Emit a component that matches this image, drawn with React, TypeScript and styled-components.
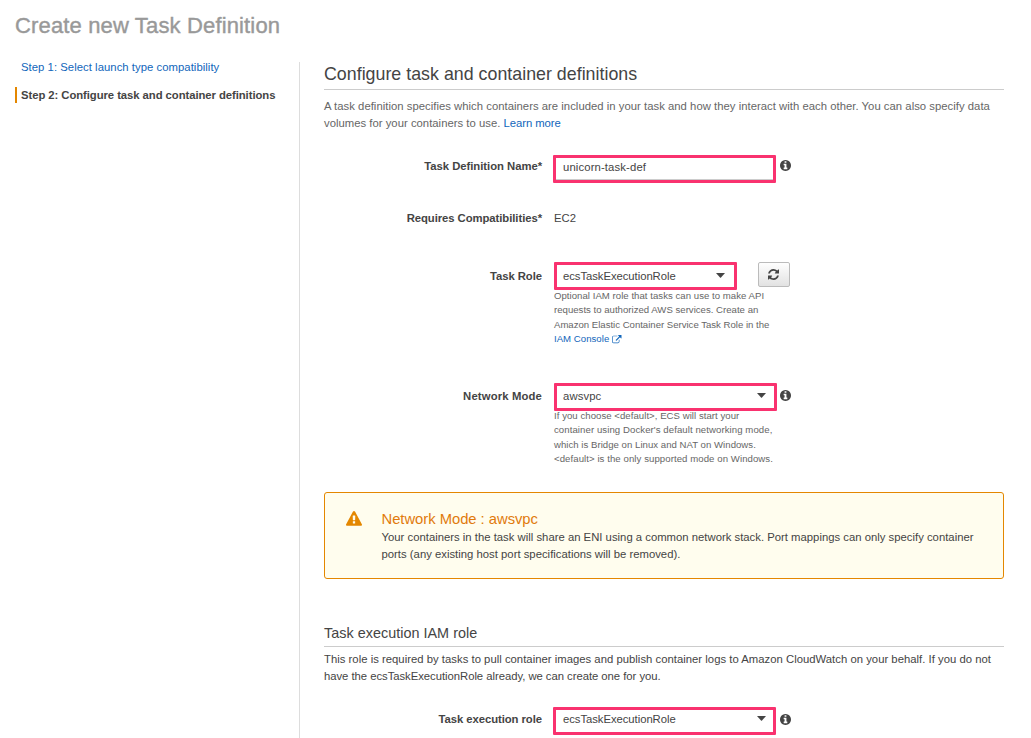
import React from 'react';
import styled, { createGlobalStyle } from 'styled-components';

const color = {
  text: '#444',
  muted: '#666',
  link: '#1166bb',
  orange: '#e48700',
  pink: '#f9326f',
  rule: '#ccc',
};

const GlobalStyle = createGlobalStyle`
  *, *::before, *::after { box-sizing: border-box; }
  body {
    margin: 0;
    background: #fff;
    color: ${color.text};
    font: 11.3px/17px "Liberation Sans", Arial, sans-serif;
    overflow: hidden;
  }
`;

const Page = styled.div`
  height: 738px;
  overflow: hidden;
  display: flex;
  flex-direction: column;
`;

const PageTitle = styled.h1`
  margin: 0;
  height: 62px;
  flex: none;
  padding: 12px 0 0 15px;
  font-size: 22px;
  line-height: 27px;
  font-weight: 400;
  letter-spacing: 0.15px;
  color: #999;
  -webkit-text-stroke: 0.4px #999;
`;

const Columns = styled.div`
  flex: 1;
  min-height: 0;
  display: grid;
  grid-template-columns: 300px 680px;
  column-gap: 24px;
`;

const Steps = styled.nav`
  display: flex;
  flex-direction: column;
  gap: 12px;
  padding-left: 15px;
  border-right: 1px solid #ddd;

  & > :first-child {
    margin-top: -3px;
  }
`;

const Step = styled.a<{ $current?: boolean }>`
  height: 16px;
  padding-left: 4px;
  white-space: nowrap;
  line-height: 17px;
  border-left: 2px solid ${p => (p.$current ? color.orange : 'transparent')};
  color: ${p => (p.$current ? color.text : color.link)};
  font-weight: ${p => (p.$current ? 700 : 400)};
  letter-spacing: ${p => (p.$current ? '-0.062px' : '0.043px')};
`;

const Main = styled.main`
  min-width: 0;
`;

const Heading = styled.h2`
  margin: 0 0 8px;
  padding-bottom: 3px;
  border-bottom: 1px solid ${color.rule};
  font-size: 17.8px;
  line-height: 24px;
  font-weight: 400;
  letter-spacing: 0.02px;
`;

const SubHeading = styled.h3`
  margin: 44px 0 4px;
  padding-bottom: 3px;
  border-bottom: 1px solid ${color.rule};
  font-size: 14.4px;
  line-height: 20px;
  font-weight: 400;
  letter-spacing: 0.02px;
`;

const Paragraph = styled.p<{ $muted?: boolean; $gap?: number }>`
  margin: 0 0 ${p => p.$gap ?? 0}px;
  color: ${p => (p.$muted ? color.muted : color.text)};
`;

const Line = styled.span<{ $track?: number }>`
  display: block;
  white-space: nowrap;
  letter-spacing: ${p => p.$track ?? 0}px;
`;

const Link = styled.a<{ $track?: number }>`
  color: ${color.link};
  letter-spacing: ${p => p.$track ?? -0.05}px;
`;

const FormRow = styled.div<{ $height: number }>`
  display: grid;
  grid-template-columns: 218px 1fr;
  column-gap: 12px;
  height: ${p => p.$height}px;
`;

const Label = styled.label<{ $top: number; $track?: number }>`
  padding-top: ${p => p.$top}px;
  text-align: right;
  font-weight: 700;
  white-space: nowrap;
  letter-spacing: ${p => p.$track ?? -0.06}px;
`;

const Control = styled.div`
  display: flex;
  align-items: flex-start;
`;

const PlainValue = styled.span`
  padding-top: 3px;
`;

const Field = styled.div<{
  $width: number;
  $textTop: number;
  $shift?: number;
  $right?: number;
  $track?: number;
  $input?: boolean;
}>`
  flex: none;
  display: flex;
  justify-content: space-between;
  width: ${p => p.$width}px;
  height: 28px;
  margin-left: ${p => p.$shift ?? 0}px;
  padding: ${p => p.$textTop}px ${p => p.$right ?? 8}px 0 ${p => 6 - (p.$shift ?? 0)}px;
  border: 3px solid ${color.pink};
  border-radius: 1px;
  box-shadow: inset 0 ${p => (p.$input ? '-1px' : '0')} 0 #ccc;
  letter-spacing: ${p => p.$track ?? -0.05}px;
`;

const Help = styled.div<{ $top: number }>`
  margin-top: ${p => p.$top}px;
  font-size: 9.6px;
  line-height: 14.4px;
  color: ${color.muted};
`;

const Caret = styled.svg`
  width: 9px;
  height: 5px;
  margin-top: 5px;
  fill: ${color.text};
`;

const Icon = styled.svg<{ $size: number; $top?: number; $left?: number }>`
  flex: none;
  width: ${p => p.$size}px;
  height: ${p => p.$size}px;
  margin: ${p => p.$top ?? 0}px 0 0 ${p => p.$left ?? 0}px;
  fill: currentColor;
`;

const RefreshButton = styled.button`
  display: flex;
  align-items: center;
  justify-content: center;
  width: 32px;
  height: 25px;
  margin: 0 0 0 21px;
  padding: 0 1px 0 0;
  border: 1px solid #bbb;
  border-radius: 2px;
  background: linear-gradient(#fefefe, #e2e2e2);
  color: ${color.text};
`;

const Alert = styled.section`
  display: flex;
  height: 87px;
  padding: 16px 20px 0 21px;
  border: 1px solid ${color.orange};
  border-radius: 3px;
  background: #fffdee;
`;

const AlertIcon = styled.span`
  display: flex;
  width: 35.5px;
  color: ${color.orange};
`;

const AlertTitle = styled.h4`
  margin: 0;
  font-size: 14.8px;
  line-height: 20px;
  font-weight: 400;
  letter-spacing: -0.03px;
  color: #e17a0c;
`;

const InfoIcon = ({ top, left }: { top: number; left: number }) => (
  <Icon viewBox="128 128 1536 1536" $size={11} $top={top} $left={left}>
    <path d="M1152 1376v-160q0-14-9-23t-23-9h-96v-512q0-14-9-23t-23-9h-320q-14 0-23 9t-9 23v160q0 14 9 23t23 9h96v320h-96q-14 0-23 9t-9 23v160q0 14 9 23t23 9h448q14 0 23-9t9-23zm-128-896v-160q0-14-9-23t-23-9h-192q-14 0-23 9t-9 23v160q0 14 9 23t23 9h192q14 0 23-9t9-23zm640 416q0 209-103 385.5t-279.5 279.5-385.5 103-385.5-103-279.5-279.5-103-385.5 103-385.5 279.5-279.5 385.5-103 385.5 103 279.5 279.5 103 385.5z" />
  </Icon>
);

const RefreshIcon = () => (
  <Icon viewBox="128 128 1536 1536" $size={11} $top={-1}>
    <path d="M1639 1056q0 5-1 7-64 268-268 434.5t-478 166.5q-146 0-282.5-55t-243.5-157l-129 129q-19 19-45 19t-45-19-19-45v-448q0-26 19-45t45-19h448q26 0 45 19t19 45-19 45l-137 137q71 66 161 102t187 36q134 0 250-65t186-179q11-17 53-117 8-23 30-23h192q13 0 22.5 9.5t9.5 22.5zm25-800v448q0 26-19 45t-45 19h-448q-26 0-45-19t-19-45 19-45l138-138q-148-137-349-137-134 0-250 65t-186 179q-11 17-53 117-8 23-30 23h-199q-13 0-22.5-9.5t-9.5-22.5v-7q65-268 270-434.5t480-166.5q146 0 284 55.5t245 156.5l130-129q19-19 45-19t45 19 19 45z" />
  </Icon>
);

const ExternalIcon = styled.svg`
  width: 9.5px;
  height: 9.5px;
  margin-left: 3px;
  vertical-align: -2px;
  fill: currentColor;
`;

const SelectCaret = () => (
  <Caret viewBox="0 0 9 5">
    <path d="M0 0h9L5 4.6q-.5.4-1 0z" />
  </Caret>
);

export default function App() {
  return (
    <>
      <GlobalStyle />
      <Page>
        <PageTitle>Create new Task Definition</PageTitle>
        <Columns>
          <Steps>
            <Step>Step 1: Select launch type compatibility</Step>
            <Step $current>Step 2: Configure task and container definitions</Step>
          </Steps>
          <Main>
            <Heading>Configure task and container definitions</Heading>
            <Paragraph $muted $gap={23}>
              <Line $track={0.025}>
                A task definition specifies which containers are included in your task and how they interact with each other. You can also specify data
              </Line>
              <Line $track={0.015}>
                volumes for your containers to use. <Link>Learn more</Link>
              </Line>
            </Paragraph>

            <FormRow $height={52}>
              <Label $top={3} $track={-0.035}>Task Definition Name*</Label>
              <Control>
                <Field $width={223} $shift={-1} $textTop={1} $track={0.13} $input>unicorn-task-def</Field>
                <InfoIcon top={5.4} left={4.4} />
              </Control>
            </FormRow>

            <FormRow $height={55}>
              <Label $top={3}>Requires Compatibilities*</Label>
              <Control>
                <PlainValue>EC2</PlainValue>
              </Control>
            </FormRow>

            <FormRow $height={121}>
              <Label $top={6}>Task Role</Label>
              <div>
                <Control>
                  <Field $width={183} $textTop={3} $right={8.6}>
                    ecsTaskExecutionRole
                    <SelectCaret />
                  </Field>
                  <RefreshButton aria-label="Refresh">
                    <RefreshIcon />
                  </RefreshButton>
                </Control>
                <Help $top={-1}>
                  <Line $track={0.035}>Optional IAM role that tasks can use to make API</Line>
                  <Line $track={0.01}>requests to authorized AWS services. Create an</Line>
                  <Line $track={-0.01}>Amazon Elastic Container Service Task Role in the</Line>
                  <Line>
                    <Link $track={0.03}>
                      IAM Console
                      <ExternalIcon viewBox="0 0 1792 1792">
                        <path d="M1408 928v320q0 119-84.5 203.5t-203.5 84.5h-832q-119 0-203.5-84.5t-84.5-203.5v-832q0-119 84.5-203.5t203.5-84.5h704q14 0 23 9t9 23v64q0 14-9 23t-23 9h-704q-66 0-113 47t-47 113v832q0 66 47 113t113 47h832q66 0 113-47t47-113v-320q0-14 9-23t23-9h64q14 0 23 9t9 23zm384-864v512q0 26-19 45t-45 19-45-19l-176-176-652 652q-10 10-23 10t-23-10l-114-114q-10-10-10-23t10-23l652-652-176-176q-19-19-19-45t19-45 45-19h512q26 0 45 19t19 45z" />
                      </ExternalIcon>
                    </Link>
                  </Line>
                </Help>
              </div>
            </FormRow>

            <FormRow $height={109}>
              <Label $top={5} $track={0.14}>Network Mode</Label>
              <div>
                <Control>
                  <Field $width={223} $textTop={2} $track={0.1} $right={7.6}>
                    awsvpc
                    <SelectCaret />
                  </Field>
                  <InfoIcon top={7} left={3.4} />
                </Control>
                <Help $top={-2}>
                  <Line $track={0.043}>If you choose &lt;default&gt;, ECS will start your</Line>
                  <Line $track={0.077}>container using Docker's default networking mode,</Line>
                  <Line $track={0.026}>which is Bridge on Linux and NAT on Windows.</Line>
                  <Line $track={0.073}>&lt;default&gt; is the only supported mode on Windows.</Line>
                </Help>
              </div>
            </FormRow>

            <Alert>
              <AlertIcon>
                <Icon viewBox="0 0 1792 1792" $size={16} $top={2}>
                  <path d="M1024 1375v-190q0-14-9.5-23.5t-22.5-9.5h-192q-13 0-22.5 9.5t-9.5 23.5v190q0 14 9.5 23.5t22.5 9.5h192q13 0 22.5-9.5t9.5-23.5zm-2-374l18-459q0-12-10-19-13-11-24-11h-220q-11 0-24 11-10 7-10 21l17 457q0 10 10 16.5t24 6.5h185q14 0 23.5-6.5t10.5-16.5zm-14-934l768 1408q35 63-2 126-17 29-46.5 46t-63.5 17h-1536q-34 0-63.5-17t-46.5-46q-37-63-2-126l768-1408q17-31 47-49t65-18 65 18 47 49z" />
                </Icon>
              </AlertIcon>
              <div>
                <AlertTitle>Network Mode : awsvpc</AlertTitle>
                <Line $track={0.008}>
                  Your containers in the task will share an ENI using a common network stack. Port mappings can only specify container
                </Line>
                <Line $track={0.01}>ports (any existing host port specifications will be removed).</Line>
              </div>
            </Alert>

            <SubHeading>Task execution IAM role</SubHeading>
            <Paragraph $gap={22}>
              <Line $track={0.018}>
                This role is required by tasks to pull container images and publish container logs to Amazon CloudWatch on your behalf. If you do not
              </Line>
              <Line $track={-0.035}>have the ecsTaskExecutionRole already, we can create one for you.</Line>
            </Paragraph>

            <FormRow $height={31}>
              <Label $top={4}>Task execution role</Label>
              <Control>
                <Field $width={223} $shift={-1} $textTop={1} $right={6.6}>
                  ecsTaskExecutionRole
                  <SelectCaret />
                </Field>
                <InfoIcon top={7} left={4.4} />
              </Control>
            </FormRow>
          </Main>
        </Columns>
      </Page>
    </>
  );
}
